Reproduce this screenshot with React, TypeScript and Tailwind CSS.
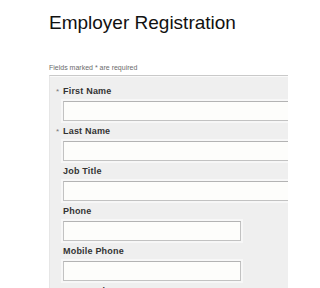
import React from "react";

type Field = { label: string; required?: boolean; short?: boolean };

const fields: Field[] = [
  { label: "First Name", required: true },
  { label: "Last Name", required: true },
  { label: "Job Title" },
  { label: "Phone", short: true },
  { label: "Mobile Phone", short: true },
  { label: "Fax Number", short: true },
];

export default function App() {
  return (
    <div
      className="w-[288px] h-[288px] overflow-hidden bg-white"
      style={{ fontFamily: '"Liberation Sans", Arial, sans-serif' }}
    >
      <div className="pl-[49px] pt-[12px]">
        <h1 className="text-[19px] leading-[22px] text-[#111] font-normal whitespace-nowrap">
          Employer Registration
        </h1>
        <p className="mt-[30px] text-[7px] leading-[8px] text-[#6b6b6b] whitespace-nowrap">
          Fields marked * are required
        </p>
        <div className="mt-[3px] w-[320px] border-t border-[#c9c9c9] border-l border-l-[#e6e6e6] bg-[#efefef] pt-[5px] pb-[10px] shadow-[inset_0_1px_0_#fafafa]">
          {fields.map((f) => (
            <div key={f.label}>
              <div className="flex h-[20px] items-center">
                <span className="w-[13px] pl-[6px] text-[8px] leading-[8px] text-[#777] translate-y-[1px]">
                  {f.required ? "*" : ""}
                </span>
                <span className="text-[9px] leading-[20px] font-bold tracking-[0.2px] text-[#333] whitespace-nowrap">
                  {f.label}
                </span>
              </div>
              <div
                className={`ml-[13px] h-[20px] border border-[#c2c2c2] border-t-[#b3b3b3] bg-[#fdfdfb] shadow-[0_0_0_2px_#f7f7f7] ${
                  f.short ? "w-[178px]" : "w-[300px]"
                }`}
              />
            </div>
          ))}
        </div>
      </div>
    </div>
  );
}
